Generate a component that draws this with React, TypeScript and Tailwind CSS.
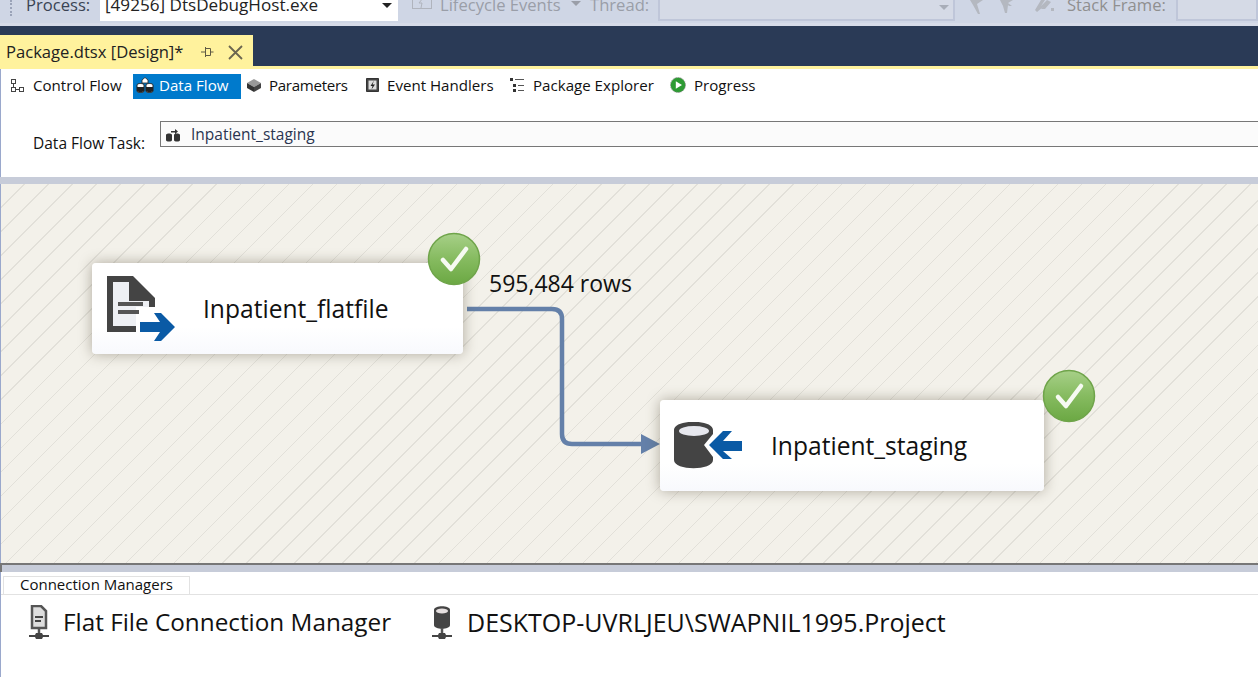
import type { ReactNode } from "react";

const font = "font-['Open_Sans','Noto_Sans',sans-serif]";

function CheckBadge({ id, className }: { id: string; className: string }) {
  return (
    <svg viewBox="0 0 54 54" className={`absolute w-[54px] h-[54px] ${className}`}>
      <defs>
        <linearGradient id={id} x1="0" y1="0" x2="0" y2="1">
          <stop offset="0" stopColor="#a7d088" />
          <stop offset="0.5" stopColor="#86bb60" />
          <stop offset="1" stopColor="#6ba843" />
        </linearGradient>
      </defs>
      <circle cx="27" cy="27" r="25.500" fill={`url(#${id})`} stroke="#6fa44a" strokeWidth="1.500" />
      <path d="M16 28l8 9 15-20" fill="none" stroke="#f6faf2" strokeWidth="4.500" strokeLinecap="round" strokeLinejoin="round" />
    </svg>
  );
}

function NodeBox({ className, labelClass, icon, label }: { className: string; labelClass: string; icon: ReactNode; label: string }) {
  return (
    <div className={`absolute rounded-[4px] bg-gradient-to-b from-white from-70% to-[#f8f9fd] shadow-[0_0_14px_rgba(70,60,40,0.4)] ${className}`}>
      {icon}
      <span className={`absolute left-[111px] text-[24.600px] leading-[36px] text-[#111] whitespace-nowrap ${labelClass}`}>{label}</span>
    </div>
  );
}

function FileIcon() {
  return (
    <svg viewBox="0 0 70 70" className="absolute left-[13px] top-[12px] w-[70px] h-[70px]">
      <path d="M2 1h26l22 22v9h-6V26H24V7H8v44h23v6H2z" fill="#444" />
      <path d="M8 7h16v19h20v6H31v19H8z" fill="#eef0f4" />
      <path d="M13 27h25v4H13zM13 35h21v4H13z" fill="#555" />
      <path d="M35 47h20l-6-9h7l14 14-14 14h-7l6-9H35z" fill="#0a5aa5" />
    </svg>
  );
}

function DbIcon() {
  return (
    <svg viewBox="0 0 74 50" className="absolute left-[13px] top-[22px] w-[74px] h-[50px]">
      <path d="M1 8C1 -3 40 -3 40 8v4L31 23l9 12v3C40 49 1 49 1 38z" fill="#444" />
      <ellipse cx="21" cy="9" rx="15" ry="5" fill="#e7e8ee" />
      <path d="M36 23L50 9h9l-9 10h19v10H50l9 8h-9z" fill="#0a5aa5" />
    </svg>
  );
}

function TabIcon({ kind }: { kind: string }) {
  if (kind === "control") {
    return (
      <svg viewBox="0 0 16 16" className="w-4 h-4" fill="none" stroke="#444">
        <rect x="2.500" y="2.500" width="4" height="4" />
        <rect x="2.500" y="10.500" width="4" height="4" />
        <rect x="10.500" y="10.500" width="4" height="4" />
        <path d="M4.500 7v3M7 12.500h3" />
      </svg>
    );
  }
  if (kind === "data") {
    return (
      <svg viewBox="0 0 18 16" className="w-[18px] h-4">
        <path d="M6 3l3-2.500L12 3v3H6z" fill="#fff" stroke="#222" strokeWidth="0.800" />
        <path d="M1 8c0-2 7-2 7 0v6c0 2-7 2-7 0z" fill="#fff" stroke="#222" />
        <path d="M10 8c0-2 7-2 7 0v6c0 2-7 2-7 0z" fill="#fff" stroke="#222" />
        <path d="M1 10h7v4c0 1.500-7 1.500-7 0zM10 10h7v4c0 1.500-7 1.500-7 0z" fill="#222" />
      </svg>
    );
  }
  if (kind === "params") {
    return (
      <svg viewBox="0 0 16 16" className="w-4 h-4">
        <path d="M8 2l7 4-7 4-7-4z" fill="#999" />
        <path d="M1 6l7 4v5l-7-4z" fill="#333" />
        <path d="M15 6l-7 4v5l7-4z" fill="#444" />
      </svg>
    );
  }
  if (kind === "events") {
    return (
      <svg viewBox="0 0 14 14" className="w-[14px] h-[14px]">
        <path d="M1.500 .500h12v13h-12z" fill="#444" stroke="#333" />
        <path d="M3.500 2.500h8v9h-8z" fill="#ddd" />
        <path d="M9 2.500L5.500 8h2l-1 3.500 3.500-5H7.500z" fill="#222" />
      </svg>
    );
  }
  if (kind === "explorer") {
    return (
      <svg viewBox="0 0 15 15" className="w-[15px] h-[15px]">
        <path d="M0 1h3v3H0zM3 7h3v3H3zM3 12h3v3H3z" fill="#333" />
        <path d="M5 2.500h9M8 8.500h6M8 13.500h6" stroke="#555" />
      </svg>
    );
  }
  return (
    <svg viewBox="0 0 16 16" className="w-4 h-4">
      <circle cx="8" cy="8" r="7.500" fill="#2e9b34" stroke="#9a9a9a" strokeDasharray="1.500 1" />
      <path d="M5.800 4.200L12 8l-6.200 3.800z" fill="#fff" />
    </svg>
  );
}

function ConnIcon({ kind }: { kind: "file" | "db" }) {
  return (
    <svg viewBox="0 0 20 34" className="w-5 h-[34px]">
      {kind === "file" ? (
        <>
          <path d="M3 1h9l5 5v17H3z" fill="#ddd" stroke="#555" strokeWidth="2.500" />
          <path d="M6 12h8M6 16h6" stroke="#444" strokeWidth="2" />
        </>
      ) : (
        <>
          <path d="M2 5c0-5 16-5 16 0v15c0 5-16 5-16 0z" fill="#444" />
          <ellipse cx="10" cy="6" rx="6" ry="2.500" fill="#e6e0e0" />
        </>
      )}
      <path d="M10 23v6" stroke="#555" strokeWidth="2.500" />
      <path d="M0 30h6l1-2h6l1 2h6v2h-6l-1 2H7l-1-2H0z" fill="#444" />
    </svg>
  );
}

const tabs = [
  { kind: "control", label: "Control Flow", box: "ml-[8px] w-[124px] gap-[8px]" },
  { kind: "data", label: "Data Flow", box: "w-[108px] bg-[#007acc] text-white pl-[3px] gap-[5px]" },
  { kind: "params", label: "Parameters", box: "ml-[5px] w-[119px] gap-[7px] tracking-[-0.3px]" },
  { kind: "events", label: "Event Handlers", box: "w-[145px] gap-[8px]" },
  { kind: "explorer", label: "Package Explorer", box: "w-[160px] gap-[8px]" },
  { kind: "progress", label: "Progress", box: "w-[90px] gap-[8px]" },
];

export default function App() {
  return (
    <div className={`${font} w-[1258px] h-[677px] overflow-hidden flex flex-col bg-white text-[#111]`}>
      {/* debug toolbar, cut off by the top of the window */}
      <div className="h-[26px] shrink-0 bg-[#cfd6e5] border-b-[3px] border-[#d6dbe8] overflow-hidden flex items-start text-[16.600px] leading-[20px] whitespace-nowrap">
        <div className="ml-[10px] h-[16px] w-[6px] shrink-0 border-l-2 border-dotted border-[#9aa3b8]" />
        <span className="ml-[10px] w-[74px] shrink-0 -mt-[5px] text-[#3a4454]">Process:</span>
        <div className="-mt-[5px] w-[298px] h-[26px] shrink-0 bg-white flex justify-between pr-[6px]">
          <span className="pl-[5px] text-[17.100px] text-[#222]">[49256] DtsDebugHost.exe</span>
          <span className="mt-[8px] border-x-[5px] border-t-[5px] border-x-transparent border-t-[#222] h-0" />
        </div>
        <svg viewBox="0 0 20 16" className="ml-[14px] -mt-[3px] w-5 h-4 shrink-0" fill="none" stroke="#b0b4bd">
          <rect x="0.500" y="0.500" width="19" height="11" />
          <path d="M11 1L7 6h3l-1 5" />
        </svg>
        <span className="ml-2 w-[121px] shrink-0 -mt-[5px] text-[#9a9ea8]">Lifecycle Events</span>
        <span className="ml-[10px] mt-[1px] shrink-0 border-x-[5px] border-t-[5px] border-x-transparent border-t-[#9a9ea8] h-0" />
        <span className="ml-[9px] w-[57px] shrink-0 -mt-[5px] text-[#9a9ea8]">Thread:</span>
        <div className="ml-[11px] -mt-[5px] w-[297px] h-[26px] shrink-0 bg-[#d5dae6] border-2 border-[#bfc6d9] flex justify-end pr-[4px]">
          <span className="mt-[8px] border-x-[5px] border-t-[5px] border-x-transparent border-t-[#a8adb8] h-0" />
        </div>
        <svg viewBox="0 0 90 14" className="ml-[12px] w-[90px] h-[14px] shrink-0" fill="#b4b8c0">
          <path d="M3 0h13l-6 4 3 10-2 0-5-9zM33 0h13l-5 3 4 3-3 0-1-1-1 8-2 0-2-7zM68 10l6-10h4l-4 6 6-6 4 2-6 7h-4l2-2-6 5zM84 8h3v3h-3z" />
        </svg>
        <span className="ml-[10px] w-[98px] shrink-0 -mt-[5px] text-[#8f8f8f]">Stack Frame:</span>
        <div className="ml-[11px] -mt-[5px] flex-1 h-[26px] bg-[#d5dae6] border-2 border-[#bfc6d9]" />
      </div>

      {/* document well */}
      <div className="h-[40px] shrink-0 bg-[#2a3a56] flex items-end">
        <div className="h-[31px] w-[253px] bg-[#fff29d] flex items-center pl-[6px] pt-[3px] text-[16.600px] text-[#222]">
          <span className="w-[178px] whitespace-nowrap">Package.dtsx [Design]*</span>
          <svg viewBox="0 0 14 14" className="ml-[16px] w-[14px] h-[14px]" fill="none" stroke="#5f5a45">
            <path d="M1 7h4M5.500 3.500h5v7h-5zM5.500 2v10M10.500 7h3" />
          </svg>
          <svg viewBox="0 0 15 15" className="ml-[14px] w-[15px] h-[15px]" stroke="#6b6650" strokeWidth="1.800">
            <path d="M1 1l13 13M14 1L1 14" />
          </svg>
        </div>
      </div>
      <div className="h-[3px] shrink-0 bg-[#fff29d]" />

      {/* designer tabs */}
      <div className="h-[108px] shrink-0 border-l border-[#9aa8cc]">
        <div className="flex items-center mt-[5px] h-[25px] text-[15.100px] leading-[20px]">
          {tabs.map((t) => (
            <div key={t.label} className={`h-[25px] flex items-center whitespace-nowrap pb-[4px] ${t.box}`}>
              <TabIcon kind={t.kind} />
              <span>{t.label}</span>
            </div>
          ))}
        </div>
        <div className="flex items-start mt-[22px]">
          <span className="ml-[32px] mt-[12px] w-[127px] text-[15.500px] leading-[20px]">Data Flow Task:</span>
          <div className="flex-1 h-[26px] bg-[#fbfbfb] border-y border-l border-[#777] flex items-center pl-[5px] pt-[2px] gap-[10px] text-[15.500px] text-[#2a3550]">
            <svg viewBox="0 0 15 13" className="w-[15px] h-[13px]" fill="#333">
              <path d="M0 6c0-2 6-2 6 0v5c0 2-6 2-6 0zM8 6c0-2 6-2 6 0v5c0 2-6 2-6 0zM5 2h4V0l3 2.500L9 5V3.500H5z" />
            </svg>
            <span>Inpatient_staging</span>
          </div>
        </div>
      </div>
      <div className="h-[7px] shrink-0 bg-[#c7ccd9]" />

      {/* design surface */}
      <div className="relative h-[379px] shrink-0 overflow-hidden bg-[#f3f1ea] bg-[repeating-linear-gradient(135deg,#f3f1ea_0px,#f3f1ea_16px,#e2e0d9_16px,#e2e0d9_17px)] border-l border-[#9aa8cc]">
        <svg viewBox="0 0 1258 379" className="absolute -left-px top-0 w-[1258px] h-[379px]">
          <path d="M467 125h85q10 0 10 10v115q0 10 10 10h72" fill="none" stroke="#6480a9" strokeWidth="4.500" />
          <path d="M641 250l19 10-19 10z" fill="#6480a9" />
        </svg>
        <NodeBox className="left-[91px] top-[79px] w-[371px] h-[91px]" labelClass="top-[28px]" icon={<FileIcon />} label="Inpatient_flatfile" />
        <NodeBox className="left-[659px] top-[216px] w-[384px] h-[91px]" labelClass="top-[28px]" icon={<DbIcon />} label="Inpatient_staging" />
        <CheckBadge id="badge-flatfile" className="left-[426px] top-[48px]" />
        <CheckBadge id="badge-staging" className="left-[1041px] top-[185px]" />
        <span className="absolute left-[488px] top-[83px] text-[23px] leading-[32px] text-[#111]">595,484 rows</span>
      </div>
      <div className="h-[9px] shrink-0 bg-[#c7ccd9] border-t-2 border-l-2 border-[#777]" />

      {/* connection managers */}
      <div className="flex-1 border-l border-[#9aa8cc]">
        <div className="mt-[4px] h-[19px] border-b border-[#e2e2e2] pl-[2px]">
          <div className="w-[187px] h-[19px] border border-[#e2e2e2] pl-[16px] text-[15px] leading-[14px] bg-white whitespace-nowrap">Connection Managers</div>
        </div>
        <div className="flex items-center mt-[10px] leading-[32px] whitespace-nowrap">
          <div className="ml-[28px]"><ConnIcon kind="file" /></div>
          <span className="ml-[14px] w-[369px] text-[24.300px]">Flat File Connection Manager</span>
          <ConnIcon kind="db" />
          <span className="ml-[15px] text-[25px]">DESKTOP-UVRLJEU\SWAPNIL1995.Project</span>
        </div>
      </div>
    </div>
  );
}
